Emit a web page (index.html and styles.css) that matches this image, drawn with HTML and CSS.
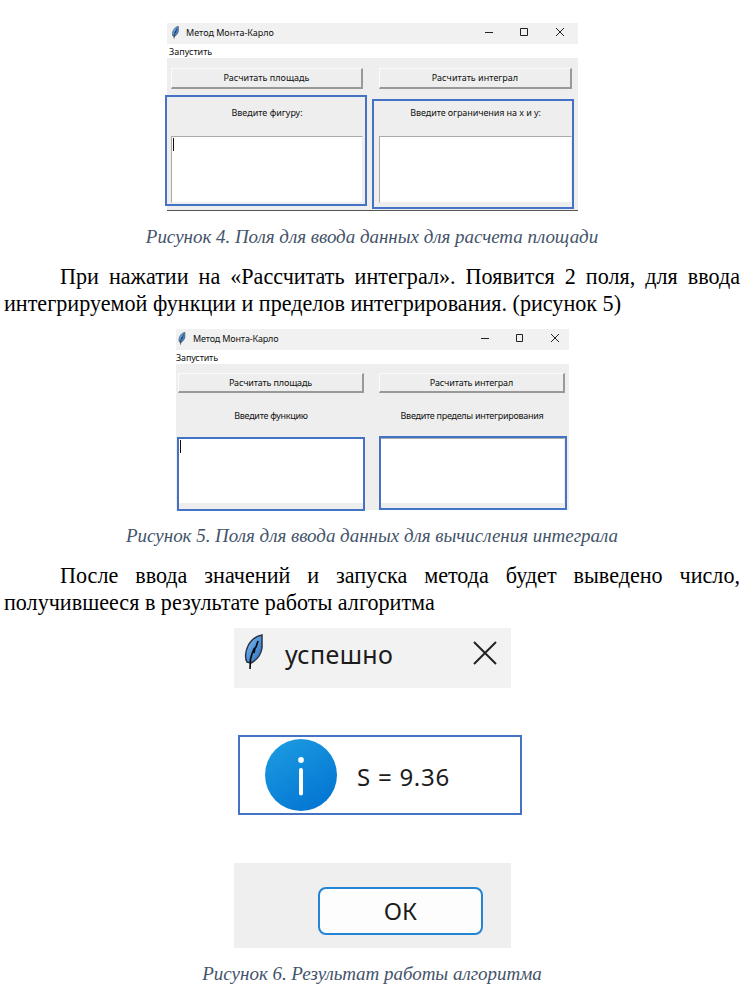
FILE: index.html
```
<!DOCTYPE html>
<html lang="ru">
<head>
<meta charset="utf-8">
<title>Метод Монта-Карло</title>
<link rel="stylesheet" href="styles.css">
</head>
<body>
<svg width="0" height="0" class="defs">
  <defs>
    <linearGradient id="blue" x1="0" y1="0" x2="1" y2="1"><stop offset="0" stop-color="#b4daf6"/><stop offset=".4" stop-color="#5a9ee2"/><stop offset="1" stop-color="#2c68b8"/></linearGradient>
    <linearGradient id="info" x1=".2" y1="0" x2=".8" y2="1"><stop offset="0" stop-color="#1b9ae0"/><stop offset="1" stop-color="#0274d2"/></linearGradient>
    <symbol id="feather" viewBox="0 0 20 36">
      <path d="M18 1C12 2 7 6 4 12C1 18 1 25 3 28L7 29C13 26 17 20 18 14Z" fill="url(#blue)" stroke="#2b3440" stroke-width="1.500"/>
      <path d="M14 7L12 13L10 15L8 20L6.500 25L6 35M11 14L10 19" fill="none" stroke="#080808" stroke-width="1.600"/>
    </symbol>
  </defs>
</svg>
<main class="page">
  <figure class="window first">
    <header class="titlebar">
      <svg class="feather"><use href="#feather"/></svg><span class="title">Метод Монта-Карло</span>
      <svg class="controls" viewBox="0 0 82 12"><path d="M1 6.5H9M36.5 2.5h7v7h-7zM72 2l8 8M80 2l-8 8"/></svg>
    </header>
    <nav class="menu"><span>Запустить</span></nav>
    <div class="panel">
      <div class="button"><span>Расчитать площадь</span></div><div class="button"><span>Расчитать интеграл</span></div>
      <div class="label"><span>Введите фигуру:</span></div><div class="label"><span class="limits">Введите ограничения на x и y:</span></div>
      <div class="field"><i class="caret"></i></div><div class="field"></div>
    </div>
    <i class="mark left"></i><i class="mark right"></i>
  </figure>
  <p class="caption"><span>Рисунок 4. Поля для ввода данных для расчета площади</span></p>
  <p class="text">При нажатии на «Рассчитать интеграл». Появится 2 поля, для ввода интегрируемой функции и пределов интегрирования. (рисунок 5)</p>
  <figure class="window second">
    <header class="titlebar">
      <svg class="feather"><use href="#feather"/></svg><span class="title">Метод Монта-Карло</span>
      <svg class="controls" viewBox="0 0 80 12"><path d="M1 6.5H9M36.500 2.500h6v7h-6zM71 2l8 8M79 2l-8 8"/></svg>
    </header>
    <nav class="menu"><span>Запустить</span></nav>
    <div class="panel">
      <div class="button"><span>Расчитать площадь</span></div><div class="button"><span>Расчитать интеграл</span></div>
      <div class="label"><span>Введите функцию</span></div><div class="label"><span>Введите пределы интегрирования</span></div>
      <div class="field"><i class="caret"></i></div><div class="field"></div>
    </div>
    <i class="mark left"></i><i class="mark right"></i>
  </figure>
  <p class="caption"><span>Рисунок 5. Поля для ввода данных для вычисления интеграла</span></p>
  <p class="text">После ввода значений и запуска метода будет выведено число, получившееся в результате работы алгоритма</p>
  <figure class="dialog">
    <header class="dialog-title">
      <svg class="quill"><use href="#feather"/></svg><span>успешно</span>
      <svg class="close" viewBox="0 0 24 24"><path d="M1 1L23 23M23 1L1 23"/></svg>
    </header>
    <div class="result">
      <svg class="info" viewBox="0 0 72 72"><circle cx="36" cy="36" r="36" fill="url(#info)"/><circle cx="36" cy="21" r="2.9" fill="#fff"/><path d="M36 31V54.500" stroke="#fff" stroke-width="4" stroke-linecap="round"/></svg>
      <span>S = 9.36</span>
    </div>
    <footer class="dialog-footer"><div class="ok"><span>ОК</span></div></footer>
  </figure>
  <p class="caption"><span>Рисунок 6. Результат работы алгоритма</span></p>
</main>
</body>
</html>
```
FILE: styles.css
```
* { box-sizing: border-box; }
body { margin: 0; background: #fff; color: #000; }
.defs { position: absolute; }
.page { display: flow-root; width: 753px; height: 991px; overflow: hidden; padding: 23px 13px 0 4px; }
figure, p { margin: 0; }
span { white-space: nowrap; }

.window { position: relative; font-family: "Noto Sans", sans-serif; font-size: 9px; color: #111; background: #eee; }
.first { width: 411px; height: 188px; margin-left: 163px; border-bottom: 1px solid #555; }
.second { width: 393px; height: 181px; margin-left: 172px; letter-spacing: -0.15px; }
.titlebar { display: flex; align-items: center; height: 21px; padding-left: 4px; background: #f1f1f1; }
.feather { width: 9px; height: 13px; margin-right: 6px; margin-top: -3px; }
.second .feather { width: 8px; margin-left: -2px; margin-right: 7px; }
.title { line-height: 18px; margin-top: -2px; }
.controls { margin-left: auto; height: 12px; margin-top: -3px; fill: none; stroke: #222; stroke-width: 1; }
.first .controls { width: 82px; margin-right: 12px; }
.second .controls { width: 80px; margin-right: 9px; }
.menu { height: 14px; padding-left: 2px; line-height: 15px; background: #fff; }
.second .menu { padding-left: 0; }
.panel { display: grid; }
.first .panel { grid-template-columns: 192px 193px; column-gap: 16px; grid-template-rows: 21px 47px 67px; padding: 10px 0 0 4px; }
.second .panel { grid-template-columns: 186px 186px; column-gap: 15px; grid-template-rows: 20px 45px 66px; padding: 9px 0 0 2px; }
.button { display: flex; align-items: center; justify-content: center; border: 1px solid #fafafa; border-right: 2px solid #999; border-bottom: 2px solid #999; line-height: 16px; }
.first .button { letter-spacing: 0.02px; }
.label { display: flex; align-items: center; justify-content: center; }
.second .label { letter-spacing: -0.28px; }
.limits { letter-spacing: -0.08px; }
.field { background: #fff; border: 1px solid #aaa; border-right-color: #eee; border-bottom-color: #eee; }
.caret { display: block; width: 1px; height: 13px; margin: 1px; background: #111; }
.mark { position: absolute; border: 2px solid #4472c4; }
.first .left { left: -2px; top: 72px; width: 202px; height: 111px; }
.first .right { left: 205px; top: 76px; width: 202px; height: 110px; }
.second .left { left: 1px; top: 108px; width: 188px; height: 74px; }
.second .right { left: 203px; top: 107px; width: 188px; height: 74px; }

.caption { height: 52px; text-align: center; font: italic 19px/52px "Liberation Serif", serif; letter-spacing: -0.03px; color: #44546a; }
.text { height: 66px; text-indent: 56px; text-align: justify; font: 22.14px/27px "Liberation Serif", serif; }

.dialog { width: 288px; height: 320px; margin-left: 230px; font-family: "Noto Sans", sans-serif; color: #1c1c1c; }
.dialog-title { display: flex; align-items: center; width: 277px; height: 60px; padding: 0 14px 9px 10px; background: #f2f2f2; font-size: 25px; letter-spacing: 0.35px; }
.quill { width: 20px; height: 36px; margin: -3px 21px 0 0; }
.close { width: 24px; height: 24px; margin-left: auto; margin-top: -2px; fill: none; stroke: #222; stroke-width: 2; }
.result { display: flex; align-items: center; width: 284px; height: 80px; margin: 47px 0 48px 4px; padding-left: 25px; border: 2px solid #4472c4; font-size: 24px; letter-spacing: 0.75px; }
.info { width: 72px; height: 72px; margin-right: 20px; }
.result span { padding-top: 2px; }
.dialog-footer { display: flex; width: 277px; height: 85px; padding: 24px 0 0 84px; background: #efefef; }
.ok { display: flex; align-items: center; justify-content: center; width: 165px; height: 48px; padding-bottom: 2px; background: #fdfdfd; border: 2px solid #2484d6; border-radius: 8px; font-size: 24px; }
```
